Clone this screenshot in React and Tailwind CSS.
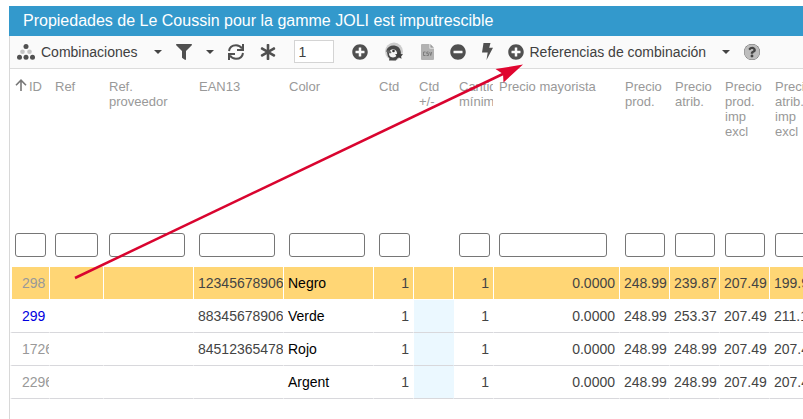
import React from 'react'
import { FaFilter, FaAsterisk, FaPlusCircle, FaMinusCircle, FaQuestionCircle } from 'react-icons/fa'

const columns = [
  { key: 'id', label: 'ID', width: 'w-10', filter: true },
  { key: 'ref', label: 'Ref', width: 'w-[54px]', filter: true },
  { key: 'supplierRef', label: 'Ref. proveedor', width: 'w-[90px]', filter: true },
  { key: 'ean', label: 'EAN13', width: 'w-[90px]', filter: true },
  { key: 'color', label: 'Color', width: 'w-[90px]', filter: true },
  { key: 'qty', label: 'Ctd', width: 'w-10', filter: true, number: true },
  { key: 'qtyDelta', label: 'Ctd +/-', width: 'w-10', filter: false },
  { key: 'minQty', label: 'Cantidad mínima', width: 'w-10', filter: true, number: true },
  { key: 'wholesale', label: 'Precio mayorista', width: 'w-[126px]', filter: true, number: true },
  { key: 'prod', label: 'Precio prod.', width: 'w-[50px]', filter: true },
  { key: 'attr', label: 'Precio atrib.', width: 'w-[50px]', filter: true },
  { key: 'prodExcl', label: 'Precio prod. imp excl', width: 'w-[50px]', filter: true },
  { key: 'attrExcl', label: 'Precio atrib. imp excl', width: 'w-[50px]', filter: true },
]

const rows = [
  { id: '298', ean: '12345678906', color: 'Negro', qty: '1', minQty: '1', wholesale: '0.0000', prod: '248.99', attr: '239.87', prodExcl: '207.49', attrExcl: '199.90' },
  { id: '299', ean: '88345678906', color: 'Verde', qty: '1', minQty: '1', wholesale: '0.0000', prod: '248.99', attr: '253.37', prodExcl: '207.49', attrExcl: '211.14' },
  { id: '1726', ean: '84512365478', color: 'Rojo', qty: '1', minQty: '1', wholesale: '0.0000', prod: '248.99', attr: '248.99', prodExcl: '207.49', attrExcl: '207.49' },
  { id: '2296', color: 'Argent', qty: '1', minQty: '1', wholesale: '0.0000', prod: '248.99', attr: '248.99', prodExcl: '207.49', attrExcl: '207.49' },
]

const Caret = () => (
  <svg width="8" height="4" viewBox="0 0 8 4" fill="#444"><path d="M0 0h8L4 4z" /></svg>
)

const CombinationsIcon = () => (
  <svg width="18" height="16" viewBox="0 0 18 16">
    <g fill="#505050">
      <circle cx="9" cy="2.5" r="2.5" />
      <circle cx="2.5" cy="13.3" r="2.5" />
      <circle cx="9" cy="13.3" r="2.5" />
      <circle cx="15.5" cy="13.3" r="2.5" />
    </g>
    <g fill="#c4c4c4">
      <circle cx="5.500" cy="7.8" r="2.300" />
      <circle cx="12.500" cy="7.8" r="2.300" />
    </g>
  </svg>
)

const RefreshIcon = () => (
  <svg width="18" height="18" viewBox="0 0 18 18" fill="none" stroke="#505050" strokeWidth="2">
    <path d="M2 8C2.500 4.500 5.300 2.200 9 2.200c2.600 0 4.600 1.200 6 3.300" />
    <path d="M16 1v6h-6" />
    <path d="M16 10c-.5 3.500-3.300 5.800-7 5.800-2.600 0-4.600-1.200-6-3.300" />
    <path d="M2 17v-6h6" />
  </svg>
)

const SortUpIcon = () => (
  <svg width="12" height="12" viewBox="0 0 12 12" fill="none" stroke="#777" strokeWidth="1.600" className="shrink-0">
    <path d="M6 12V1.500M1 6.200l5-5 5 5" />
  </svg>
)

const PrestaIcon = () => (
  <svg width="20" height="20" viewBox="0 0 20 20">
    <circle cx="10" cy="9.5" r="9" fill="#cdcdcd" />
    <path d="M2.500 8C4 4.500 7 3 10.500 3.500c4.500.8 6.500 4 6.500 8l-2 2-3 5H5l.5-2.500c-1-.5-2-2-2-3.500z" fill="#484848" />
    <path d="M5.500 9.500C7 6.500 11 6.500 12.500 9.500s-.5 6-3.500 6-5-3-3.500-6z" fill="#f4f4f4" />
    <circle cx="9.500" cy="9" r="1.300" fill="#333" />
    <path d="M2 9c2-1.500 5-.5 5.500 2-1.500.5-4 .5-5.500-2z" fill="#666" />
    <path d="m15 9.500 1.300 2.400 2.700.4-1.900 1.900.4 2.600-2.500-1.200-2.500 1.200.4-2.600-1.900-1.900 2.700-.4z" fill="#3c3c3c" />
  </svg>
)

const CsvIcon = () => (
  <svg width="13" height="16" viewBox="0 0 13 16">
    <path d="M1 0h7.500v4.500H13V15a1 1 0 0 1-1 1H1a1 1 0 0 1-1-1V1a1 1 0 0 1 1-1z" fill="#b2b2b2" />
    <path d="M9.300 0 13 3.700H9.300z" fill="#999" />
    <path d="M4.500 8H2.500v3.500h2M7.500 8H5.800v1.700h1.700v1.800H5.500M8.700 8l1 3.500 1-3.500" fill="none" stroke="#777" strokeWidth=".9" />
  </svg>
)

const BoltIcon = () => (
  <svg width="11" height="17" viewBox="0 0 11 17" fill="#505050">
    <path d="M1.500 0h7L7.200 4.800H11L4.500 17l1.200-7.500H0z" />
  </svg>
)

const ToolButton = ({ label, children }) => (
  <button type="button" aria-label={label} className="flex w-5 shrink-0 items-center justify-center">
    {children}
  </button>
)

const Toolbar = () => (
  <div className="flex h-8 items-center bg-[#fafafa] pl-[7px] pb-px text-sm text-[#404040]">
    <button type="button" className="flex shrink-0 items-center gap-1.5">
      <CombinationsIcon />
      Combinaciones
      <span className="ml-2.5"><Caret /></span>
    </button>
    <div className="ml-3 flex shrink-0 items-center gap-1.5 text-[#505050]">
      <ToolButton label="Filtrar"><FaFilter size={16} /></ToolButton>
      <ToolButton label="Opciones de filtro"><Caret /></ToolButton>
      <ToolButton label="Actualizar"><RefreshIcon /></ToolButton>
    </div>
    <div className="ml-3 flex shrink-0 items-center text-[#505050]">
      <ToolButton label="Nuevo"><FaAsterisk size={16} /></ToolButton>
    </div>
    <input
      aria-label="Cantidad"
      defaultValue="1"
      className="ml-4 h-[23px] w-10 shrink-0 border border-[#d4d4d4] bg-white px-1"
    />
    <div className="ml-4 flex shrink-0 items-center gap-3.5 text-[#505050]">
      <ToolButton label="Añadir"><FaPlusCircle size={16} /></ToolButton>
      <ToolButton label="PrestaShop"><PrestaIcon /></ToolButton>
      <ToolButton label="Exportar CSV"><CsvIcon /></ToolButton>
    </div>
    <div className="ml-2.5 flex shrink-0 items-center gap-2.5 text-[#505050]">
      <ToolButton label="Eliminar"><FaMinusCircle size={16} /></ToolButton>
      <ToolButton label="Acciones"><BoltIcon /></ToolButton>
    </div>
    <button type="button" className="ml-2.5 flex shrink-0 items-center gap-1.5">
      <FaPlusCircle size={16} className="text-[#505050]" />
      Referencias de combinación
      <span className="ml-2.5"><Caret /></span>
    </button>
    <button type="button" aria-label="Ayuda" className="ml-3.5 shrink-0">
      <span className="block rounded-full bg-[#444]"><FaQuestionCircle size={16} className="text-[#bdbdbd]" /></span>
    </button>
  </div>
)

const cellColor = (key, i) => {
  if (key === 'id') return i === 1 ? 'text-[#0000e0]' : 'text-[#999]'
  if (key === 'color') return 'text-black'
  return 'text-[#444]'
}

const Grid = () => (
  <table className="w-[810px] table-fixed border-separate border-spacing-0 text-left">
    <colgroup>
      {columns.map((c) => <col key={c.key} className={c.width} />)}
    </colgroup>
    <thead className="text-[13px] leading-[15px] text-[#999]">
      <tr className="h-[160px]">
        {columns.map((c) => (
          <th key={c.key} scope="col" className="overflow-hidden border-r border-transparent pt-2.5 pl-[5px] align-top font-normal">
            {c.key === 'id' ? (
              <span className="flex gap-0.5">
                <SortUpIcon />
                {c.label}
              </span>
            ) : (
              <span className={c.key === 'wholesale' ? 'whitespace-nowrap' : ''}>{c.label}</span>
            )}
          </th>
        ))}
      </tr>
      <tr className="h-[38px]">
        {columns.map((c) => (
          <td key={c.key} className="border-r border-transparent pt-1 pl-[5px] align-top">
            {c.filter && (
              <input
                aria-label={`Filtrar ${c.label}`}
                className="block h-6 w-[90%] rounded-[3px] border border-[#767676] bg-white px-1"
              />
            )}
          </td>
        ))}
      </tr>
    </thead>
    <tbody className="text-sm">
      {rows.map((row, i) => (
        <tr key={row.id} className="h-[33px]">
          {columns.map((c) => (
            <td
              key={c.key}
              className={`overflow-hidden border-r border-b whitespace-nowrap pb-px ${cellColor(c.key, i)}
                ${c.key === 'id' ? 'border-l-2 pl-2.5' : 'pl-1'} ${c.number ? 'pr-1 text-right' : ''}
                ${i === 0 ? 'border-x-white border-b-white bg-[#ffd675]' : 'border-r-transparent border-b-[#d8d8dc]'}
                ${i > 0 && c.key === 'id' ? 'border-l-transparent' : ''}
                ${i > 0 && c.key === 'qtyDelta' ? 'bg-[#ebf8ff]' : ''}`}
            >
              {row[c.key]}
            </td>
          ))}
        </tr>
      ))}
    </tbody>
  </table>
)

const App = () => {
  return (
    <main className="relative min-h-screen overflow-hidden bg-white pt-1.5 pl-[9px] font-['Liberation_Sans',Arial,sans-serif]">
      <h1 className="h-[30px] bg-[#3399cc] pl-3.5 text-base leading-[29px] text-white">
        Propiedades de Le Coussin pour la gamme JOLI est imputrescible
      </h1>
      <div className="min-h-[calc(100vh-36px)] border-l border-[#d8d8d8]">
        <Toolbar />
        <div className="overflow-hidden border-t border-[#dcdcdc]">
          <Grid />
        </div>
      </div>

      {/* Pointer from the selected row to the references menu */}
      <svg className="pointer-events-none absolute top-0 left-0" width="530" height="290" viewBox="0 0 530 290">
        <path d="M75 278 506 72.500" stroke="#d9042f" strokeWidth="2.500" />
        <path d="M523 64.500 495.500 69l7.500 5 .5 8.500z" fill="#e0052f" />
      </svg>
    </main>
  )
}

export default App
